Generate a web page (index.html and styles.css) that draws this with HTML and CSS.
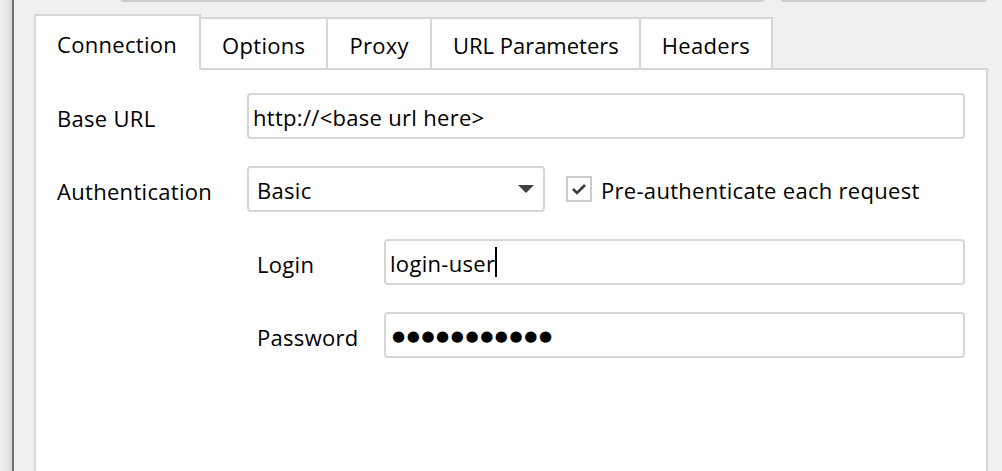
FILE: index.html
```html
<!DOCTYPE html>
<html>
<head>
<meta charset="utf-8">
<link rel="stylesheet" href="styles.css">
</head>
<body>
<div class="window">
  <div class="shadow"></div>
  <div class="edge"></div>
  <div class="main">
    <div class="topbar">
      <div class="top-field"></div>
      <div class="top-button"></div>
    </div>
    <div class="tabs">
      <div class="tab active">Connection</div>
      <div class="tab">Options</div>
      <div class="tab">Proxy</div>
      <div class="tab tight">URL Parameters</div>
      <div class="tab">Headers</div>
    </div>
    <div class="panel">
      <div class="form">
        <div class="row">
          <div class="label">Base URL</div>
          <div class="field wide"><span class="value">http://&lt;base url here&gt;</span></div>
        </div>
        <div class="row">
          <div class="label">Authentication</div>
          <div class="field select">
            <span class="value">Basic</span>
            <svg class="arrow" width="16" height="8" viewBox="0 0 16 8"><path d="M0 0 H16 L8 8 Z" fill="#404040"/></svg>
          </div>
          <div class="check">
            <span class="box"><svg width="22" height="22" viewBox="0 0 22 22"><path d="M5 11 L9 15 L17 7" fill="none" stroke="#3c3c3c" stroke-width="2.6"/></svg></span>
            <span class="check-label">Pre-authenticate each request</span>
          </div>
        </div>
        <div class="row sub">
          <div class="sublabel">Login</div>
          <div class="field wide"><span class="value">login-user</span><span class="caret"></span></div>
        </div>
        <div class="row sub">
          <div class="sublabel">Password</div>
          <div class="field wide"><span class="value dots">●●●●●●●●●●●</span></div>
        </div>
      </div>
    </div>
  </div>
</div>
</body>
</html>
```

FILE: styles.css
```css
html, body {
  margin: 0;
  padding: 0;
  background: #f0f0f0;
  overflow: hidden;
  height: 471px;
}
body {
  font-family: "Open Sans", "Noto Sans", "Liberation Sans", sans-serif;
  font-size: 22px;
  letter-spacing: 0.3px;
  color: #000;
}
.window {
  display: flex;
  height: 471px;
}
.shadow {
  width: 12px;
  flex: none;
  background: linear-gradient(to right, #f0f0f0, #e6e6e6 60%, #d6d6d6);
}
.edge {
  width: 2px;
  flex: none;
  background: #6e6e6e;
}
.main {
  flex: 1;
  padding-left: 20px;
  padding-right: 14px;
}
.topbar {
  display: flex;
  height: 42px;
  margin-top: -40px;
  margin-bottom: 12px;
}
.top-field {
  margin-left: 86px;
  width: 645px;
  box-sizing: border-box;
  border: 2px solid #cdcdcd;
  border-radius: 4px;
  background: #e6e6e6;
}
.top-button {
  margin-left: 15px;
  width: 207px;
  box-sizing: border-box;
  border: 2px solid #cdcdcd;
  border-radius: 4px;
  background: #f4f4f4;
}
.tabs {
  display: flex;
  align-items: flex-end;
  position: relative;
  z-index: 1;
}
.tab {
  box-sizing: border-box;
  height: 51px;
  padding: 3px 21px 0 21px;
  border: 2px solid #d6d6d6;
  border-bottom: none;
  margin-left: -2px;
  background: #fff;
  display: flex;
  align-items: center;
  line-height: 1;
}
.tab:first-child {
  margin-left: 0;
}
.tab.tight {
  letter-spacing: 0;
  padding-right: 20px;
}
.tab.active {
  height: 56px;
  margin-bottom: -2px;
  padding-top: 1px;
  position: relative;
  z-index: 2;
  padding-left: 21px;
  padding-right: 22px;
}
.panel {
  box-sizing: border-box;
  width: 954px;
  height: 500px;
  border: 2px solid #d6d6d6;
  background: #fff;
  padding: 23px 21px 0 21px;
}
.form {
  display: flex;
  flex-direction: column;
  gap: 27px;
}
.row {
  display: flex;
  align-items: center;
  height: 46px;
}
.row.sub {
  padding-left: 200px;
}
.label {
  width: 190px;
  flex: none;
  padding-top: 3px;
}
.sublabel {
  width: 127px;
  flex: none;
  padding-top: 3px;
}
.value {
  padding-top: 1px;
}
.field {
  box-sizing: border-box;
  height: 46px;
  border: 2px solid #d6d6d6;
  border-radius: 4px;
  background: #fff;
  display: flex;
  align-items: center;
  padding-left: 4px;
}
.field.wide {
  flex: 1;
}
.field.select {
  width: 298px;
  flex: none;
  justify-content: space-between;
  padding-left: 8px;
  padding-right: 9px;
}
.arrow {
  display: block;
}
.check {
  display: flex;
  align-items: center;
  margin-left: 21px;
}
.check-label {
  padding-top: 2px;
}
.box {
  box-sizing: border-box;
  width: 26px;
  height: 26px;
  border: 2px solid #cccccc;
  background: #fff;
  display: flex;
  align-items: center;
  justify-content: center;
  margin-right: 9px;
}
.box svg {
  display: block;
}
.caret {
  display: inline-block;
  width: 2px;
  height: 30px;
  background: #000;
  margin-left: 0;
}
.dots {
  font-family: "DejaVu Sans", sans-serif;
  font-size: 15px;
  letter-spacing: 1.6px;
  padding-left: 2px;
}
```
